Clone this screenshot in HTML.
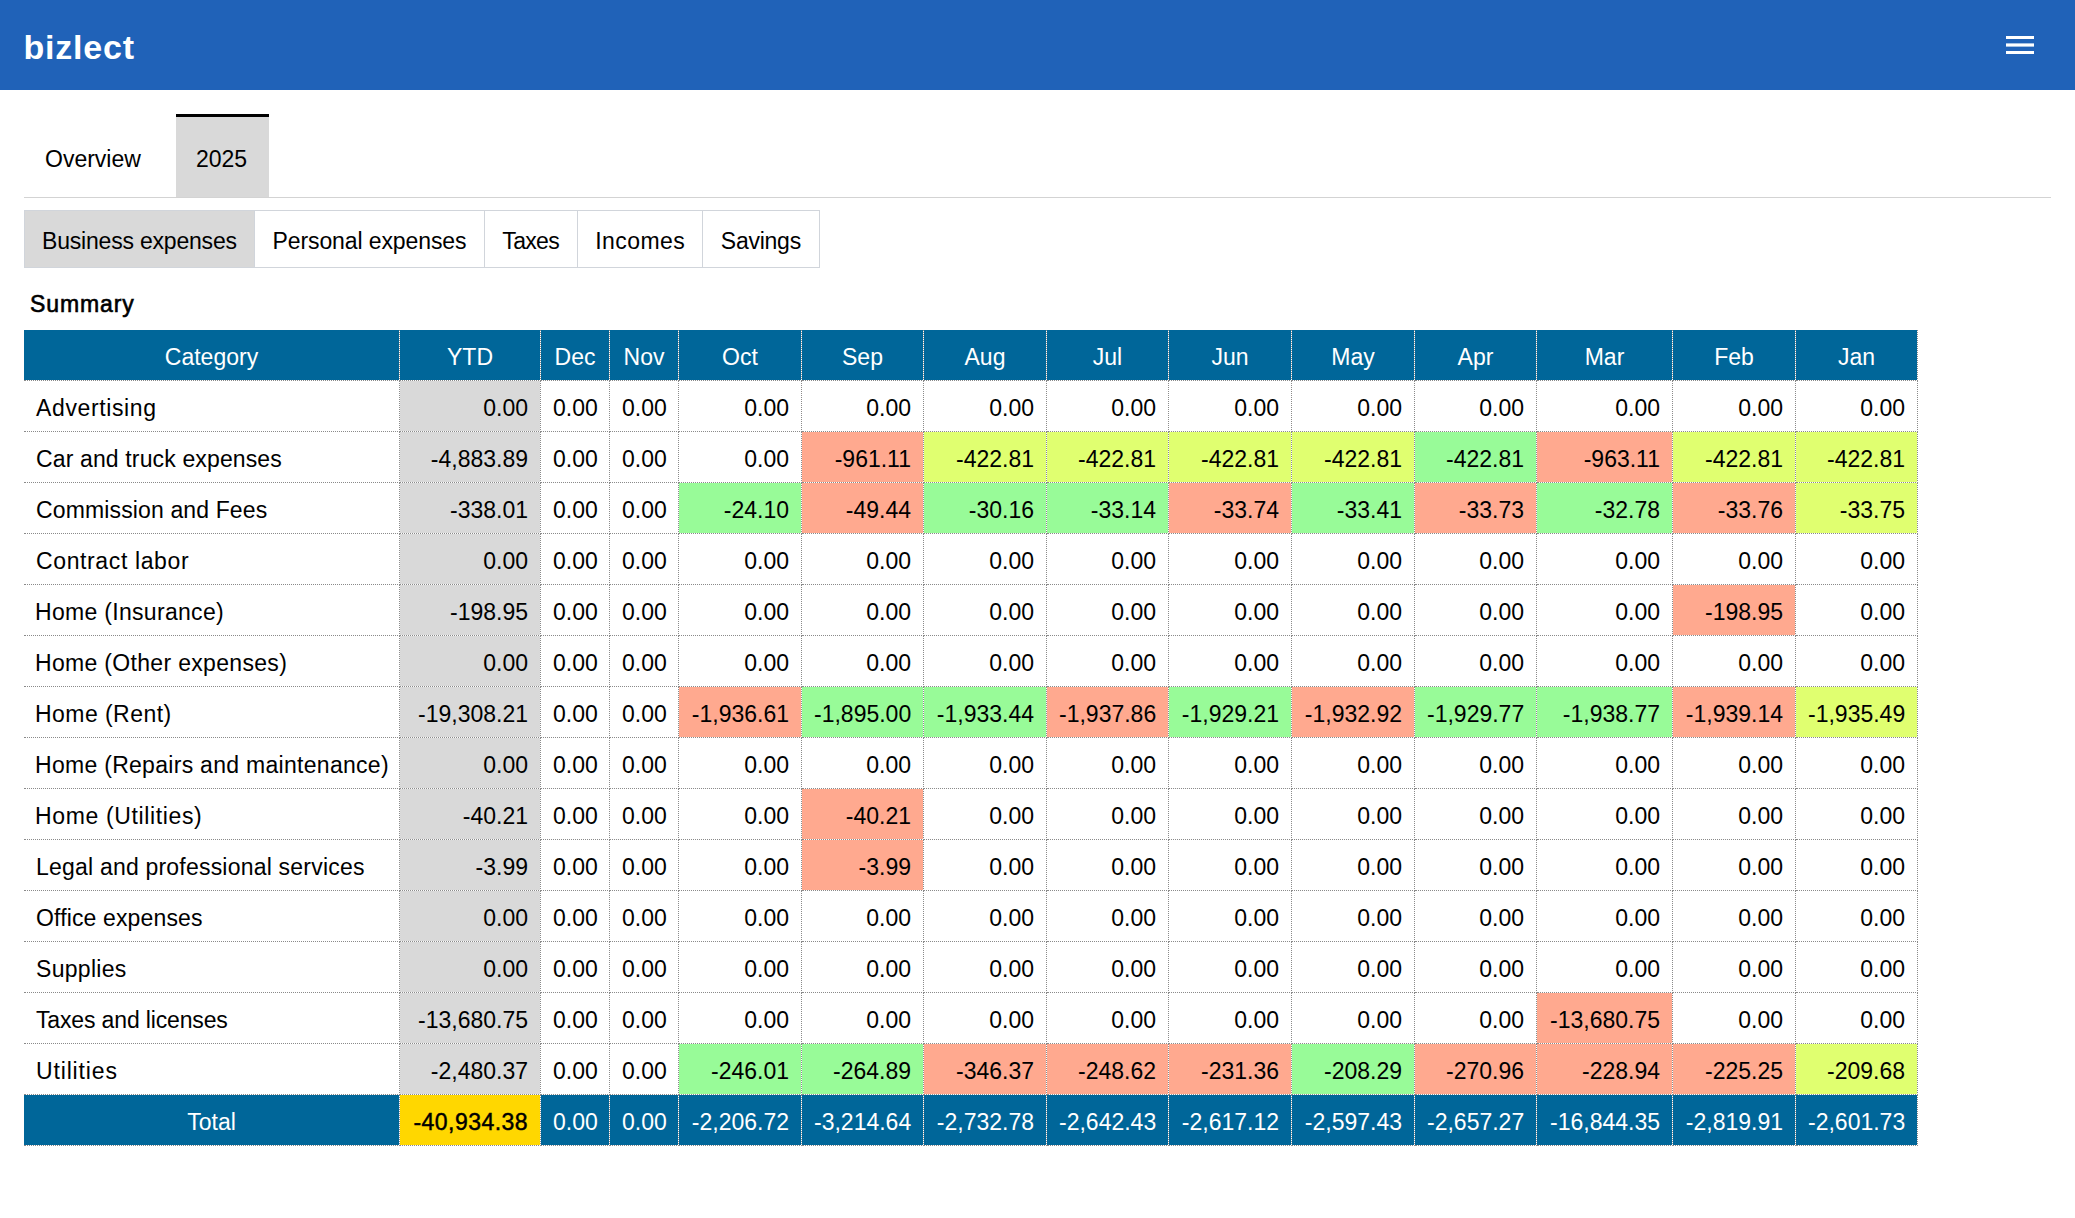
<!DOCTYPE html><html><head><meta charset="utf-8"><title>bizlect</title><style>
*{box-sizing:border-box;margin:0;padding:0}
html,body{width:2075px;height:1218px;overflow:hidden;background:#fff;font-family:"Liberation Sans",sans-serif;color:#000}
.top{position:absolute;left:0;top:0;width:2075px;height:90px;background:#2062b8}
.logo{position:absolute;left:23.5px;top:27px;font-size:34px;font-weight:bold;color:#fff;line-height:40px;letter-spacing:0.8px}
.bar{position:absolute;left:2006px;width:28px;height:3px;background:#fff}
.t{position:absolute;font-size:23px;line-height:30px;white-space:nowrap}
.tab2025{position:absolute;left:176px;top:114px;width:93px;height:83px;background:#d9d9d9;border-top:3px solid #000}
.tabline{position:absolute;left:24px;top:197px;width:2027px;height:1px;background:#d3d3d3}
.sub{position:absolute;top:210px;height:58px;border:1px solid #d1d5db;font-size:23px;text-align:center;line-height:60px;white-space:nowrap}
.summary{position:absolute;left:30px;top:289px;font-size:23px;font-weight:normal;-webkit-text-stroke:0.6px #000;letter-spacing:0.9px;line-height:30px}
.tbl{position:absolute;left:24px;top:330px;background:#fff}
.row{display:flex;height:51px}
.c{height:51px;border-right:1px dotted #8a8a8a;border-bottom:1px dotted #8a8a8a;font-size:23px;line-height:50px;padding:2px 12px 0;white-space:nowrap;overflow:hidden;text-align:right;background-clip:padding-box}
.c.cat{text-align:left}
.hd .c,.tot .c{background-color:#006699;color:#fff;text-align:center}
.tot .c{text-align:right}
.tot .c.cat{text-align:center}
.ytd{background-color:#d9d9d9}
.r{background-color:#ffa98f}
.g{background-color:#98fb98}
.y{background-color:#e0ff70}
.tot .gold{background-color:#ffd700;color:#000;-webkit-text-stroke:0.45px #000;letter-spacing:0.45px}
</style></head><body>
<div class="top"><div class="logo">bizlect</div><svg style="position:absolute;left:2006px;top:36px" width="28" height="18" viewBox="0 0 28 18"><rect x="0" y="0" width="28" height="3" fill="#fff"/><rect x="0" y="7.4" width="28" height="3.2" fill="#fff"/><rect x="0" y="15" width="28" height="3" fill="#fff"/></svg></div>
<div class="t" style="left:45px;top:144px">Overview</div>
<div class="tab2025"></div><div class="t" style="left:196px;top:144px">2025</div>
<div class="tabline"></div>
<div class="sub" style="left:24px;width:231px;background:#d9d9d9;letter-spacing:-0.2px;text-indent:-0.2px">Business expenses</div>
<div class="sub" style="left:254px;width:231px;background:#fff;letter-spacing:-0.1px;text-indent:-0.1px">Personal expenses</div>
<div class="sub" style="left:484px;width:94px;background:#fff;letter-spacing:-0.7px;text-indent:-0.7px">Taxes</div>
<div class="sub" style="left:577px;width:126px;background:#fff;letter-spacing:0.45px;text-indent:0.45px">Incomes</div>
<div class="sub" style="left:702px;width:118px;background:#fff;letter-spacing:-0.25px;text-indent:-0.25px">Savings</div>
<div class="summary">Summary</div>
<div class="tbl">
<div class="row hd"><div class="c" style="width:376px">Category</div><div class="c" style="width:141px">YTD</div><div class="c" style="width:69px">Dec</div><div class="c" style="width:69px">Nov</div><div class="c" style="width:123px">Oct</div><div class="c" style="width:122px">Sep</div><div class="c" style="width:123px">Aug</div><div class="c" style="width:122px">Jul</div><div class="c" style="width:123px">Jun</div><div class="c" style="width:123px">May</div><div class="c" style="width:122px">Apr</div><div class="c" style="width:136px">Mar</div><div class="c" style="width:123px">Feb</div><div class="c" style="width:122px">Jan</div></div>
<div class="row"><div class="c cat" style="width:376px;letter-spacing:0.63px;text-indent:0px">Advertising</div><div class="c ytd" style="width:141px">0.00</div><div class="c " style="width:69px">0.00</div><div class="c " style="width:69px">0.00</div><div class="c " style="width:123px">0.00</div><div class="c " style="width:122px">0.00</div><div class="c " style="width:123px">0.00</div><div class="c " style="width:122px">0.00</div><div class="c " style="width:123px">0.00</div><div class="c " style="width:123px">0.00</div><div class="c " style="width:122px">0.00</div><div class="c " style="width:136px">0.00</div><div class="c " style="width:123px">0.00</div><div class="c " style="width:122px">0.00</div></div>
<div class="row"><div class="c cat" style="width:376px;letter-spacing:0.138px;text-indent:0px">Car and truck expenses</div><div class="c ytd" style="width:141px">-4,883.89</div><div class="c " style="width:69px">0.00</div><div class="c " style="width:69px">0.00</div><div class="c " style="width:123px">0.00</div><div class="c r" style="width:122px">-961.11</div><div class="c y" style="width:123px">-422.81</div><div class="c y" style="width:122px">-422.81</div><div class="c y" style="width:123px">-422.81</div><div class="c y" style="width:123px">-422.81</div><div class="c g" style="width:122px">-422.81</div><div class="c r" style="width:136px">-963.11</div><div class="c y" style="width:123px">-422.81</div><div class="c y" style="width:122px">-422.81</div></div>
<div class="row"><div class="c cat" style="width:376px;letter-spacing:0.133px;text-indent:0px">Commission and Fees</div><div class="c ytd" style="width:141px">-338.01</div><div class="c " style="width:69px">0.00</div><div class="c " style="width:69px">0.00</div><div class="c g" style="width:123px">-24.10</div><div class="c r" style="width:122px">-49.44</div><div class="c g" style="width:123px">-30.16</div><div class="c g" style="width:122px">-33.14</div><div class="c r" style="width:123px">-33.74</div><div class="c g" style="width:123px">-33.41</div><div class="c r" style="width:122px">-33.73</div><div class="c g" style="width:136px">-32.78</div><div class="c r" style="width:123px">-33.76</div><div class="c y" style="width:122px">-33.75</div></div>
<div class="row"><div class="c cat" style="width:376px;letter-spacing:0.623px;text-indent:0px">Contract labor</div><div class="c ytd" style="width:141px">0.00</div><div class="c " style="width:69px">0.00</div><div class="c " style="width:69px">0.00</div><div class="c " style="width:123px">0.00</div><div class="c " style="width:122px">0.00</div><div class="c " style="width:123px">0.00</div><div class="c " style="width:122px">0.00</div><div class="c " style="width:123px">0.00</div><div class="c " style="width:123px">0.00</div><div class="c " style="width:122px">0.00</div><div class="c " style="width:136px">0.00</div><div class="c " style="width:123px">0.00</div><div class="c " style="width:122px">0.00</div></div>
<div class="row"><div class="c cat" style="width:376px;letter-spacing:0.307px;text-indent:-1px">Home (Insurance)</div><div class="c ytd" style="width:141px">-198.95</div><div class="c " style="width:69px">0.00</div><div class="c " style="width:69px">0.00</div><div class="c " style="width:123px">0.00</div><div class="c " style="width:122px">0.00</div><div class="c " style="width:123px">0.00</div><div class="c " style="width:122px">0.00</div><div class="c " style="width:123px">0.00</div><div class="c " style="width:123px">0.00</div><div class="c " style="width:122px">0.00</div><div class="c " style="width:136px">0.00</div><div class="c r" style="width:123px">-198.95</div><div class="c " style="width:122px">0.00</div></div>
<div class="row"><div class="c cat" style="width:376px;letter-spacing:0.32px;text-indent:-1px">Home (Other expenses)</div><div class="c ytd" style="width:141px">0.00</div><div class="c " style="width:69px">0.00</div><div class="c " style="width:69px">0.00</div><div class="c " style="width:123px">0.00</div><div class="c " style="width:122px">0.00</div><div class="c " style="width:123px">0.00</div><div class="c " style="width:122px">0.00</div><div class="c " style="width:123px">0.00</div><div class="c " style="width:123px">0.00</div><div class="c " style="width:122px">0.00</div><div class="c " style="width:136px">0.00</div><div class="c " style="width:123px">0.00</div><div class="c " style="width:122px">0.00</div></div>
<div class="row"><div class="c cat" style="width:376px;letter-spacing:0.45px;text-indent:-1px">Home (Rent)</div><div class="c ytd" style="width:141px">-19,308.21</div><div class="c " style="width:69px">0.00</div><div class="c " style="width:69px">0.00</div><div class="c r" style="width:123px">-1,936.61</div><div class="c g" style="width:122px">-1,895.00</div><div class="c g" style="width:123px">-1,933.44</div><div class="c r" style="width:122px">-1,937.86</div><div class="c g" style="width:123px">-1,929.21</div><div class="c r" style="width:123px">-1,932.92</div><div class="c g" style="width:122px">-1,929.77</div><div class="c g" style="width:136px">-1,938.77</div><div class="c r" style="width:123px">-1,939.14</div><div class="c y" style="width:122px">-1,935.49</div></div>
<div class="row"><div class="c cat" style="width:376px;letter-spacing:0.29px;text-indent:-1px">Home (Repairs and maintenance)</div><div class="c ytd" style="width:141px">0.00</div><div class="c " style="width:69px">0.00</div><div class="c " style="width:69px">0.00</div><div class="c " style="width:123px">0.00</div><div class="c " style="width:122px">0.00</div><div class="c " style="width:123px">0.00</div><div class="c " style="width:122px">0.00</div><div class="c " style="width:123px">0.00</div><div class="c " style="width:123px">0.00</div><div class="c " style="width:122px">0.00</div><div class="c " style="width:136px">0.00</div><div class="c " style="width:123px">0.00</div><div class="c " style="width:122px">0.00</div></div>
<div class="row"><div class="c cat" style="width:376px;letter-spacing:0.633px;text-indent:-1px">Home (Utilities)</div><div class="c ytd" style="width:141px">-40.21</div><div class="c " style="width:69px">0.00</div><div class="c " style="width:69px">0.00</div><div class="c " style="width:123px">0.00</div><div class="c r" style="width:122px">-40.21</div><div class="c " style="width:123px">0.00</div><div class="c " style="width:122px">0.00</div><div class="c " style="width:123px">0.00</div><div class="c " style="width:123px">0.00</div><div class="c " style="width:122px">0.00</div><div class="c " style="width:136px">0.00</div><div class="c " style="width:123px">0.00</div><div class="c " style="width:122px">0.00</div></div>
<div class="row"><div class="c cat" style="width:376px;letter-spacing:0.207px;text-indent:0px">Legal and professional services</div><div class="c ytd" style="width:141px">-3.99</div><div class="c " style="width:69px">0.00</div><div class="c " style="width:69px">0.00</div><div class="c " style="width:123px">0.00</div><div class="c r" style="width:122px">-3.99</div><div class="c " style="width:123px">0.00</div><div class="c " style="width:122px">0.00</div><div class="c " style="width:123px">0.00</div><div class="c " style="width:123px">0.00</div><div class="c " style="width:122px">0.00</div><div class="c " style="width:136px">0.00</div><div class="c " style="width:123px">0.00</div><div class="c " style="width:122px">0.00</div></div>
<div class="row"><div class="c cat" style="width:376px;letter-spacing:0.143px;text-indent:0px">Office expenses</div><div class="c ytd" style="width:141px">0.00</div><div class="c " style="width:69px">0.00</div><div class="c " style="width:69px">0.00</div><div class="c " style="width:123px">0.00</div><div class="c " style="width:122px">0.00</div><div class="c " style="width:123px">0.00</div><div class="c " style="width:122px">0.00</div><div class="c " style="width:123px">0.00</div><div class="c " style="width:123px">0.00</div><div class="c " style="width:122px">0.00</div><div class="c " style="width:136px">0.00</div><div class="c " style="width:123px">0.00</div><div class="c " style="width:122px">0.00</div></div>
<div class="row"><div class="c cat" style="width:376px;letter-spacing:0.3px;text-indent:0px">Supplies</div><div class="c ytd" style="width:141px">0.00</div><div class="c " style="width:69px">0.00</div><div class="c " style="width:69px">0.00</div><div class="c " style="width:123px">0.00</div><div class="c " style="width:122px">0.00</div><div class="c " style="width:123px">0.00</div><div class="c " style="width:122px">0.00</div><div class="c " style="width:123px">0.00</div><div class="c " style="width:123px">0.00</div><div class="c " style="width:122px">0.00</div><div class="c " style="width:136px">0.00</div><div class="c " style="width:123px">0.00</div><div class="c " style="width:122px">0.00</div></div>
<div class="row"><div class="c cat" style="width:376px;letter-spacing:-0.147px;text-indent:0px">Taxes and licenses</div><div class="c ytd" style="width:141px">-13,680.75</div><div class="c " style="width:69px">0.00</div><div class="c " style="width:69px">0.00</div><div class="c " style="width:123px">0.00</div><div class="c " style="width:122px">0.00</div><div class="c " style="width:123px">0.00</div><div class="c " style="width:122px">0.00</div><div class="c " style="width:123px">0.00</div><div class="c " style="width:123px">0.00</div><div class="c " style="width:122px">0.00</div><div class="c r" style="width:136px">-13,680.75</div><div class="c " style="width:123px">0.00</div><div class="c " style="width:122px">0.00</div></div>
<div class="row"><div class="c cat" style="width:376px;letter-spacing:0.85px;text-indent:0px">Utilities</div><div class="c ytd" style="width:141px">-2,480.37</div><div class="c " style="width:69px">0.00</div><div class="c " style="width:69px">0.00</div><div class="c g" style="width:123px">-246.01</div><div class="c g" style="width:122px">-264.89</div><div class="c r" style="width:123px">-346.37</div><div class="c r" style="width:122px">-248.62</div><div class="c r" style="width:123px">-231.36</div><div class="c g" style="width:123px">-208.29</div><div class="c r" style="width:122px">-270.96</div><div class="c r" style="width:136px">-228.94</div><div class="c r" style="width:123px">-225.25</div><div class="c y" style="width:122px">-209.68</div></div>
<div class="row tot"><div class="c cat" style="width:376px">Total</div><div class="c gold" style="width:141px">-40,934.38</div><div class="c" style="width:69px">0.00</div><div class="c" style="width:69px">0.00</div><div class="c" style="width:123px">-2,206.72</div><div class="c" style="width:122px">-3,214.64</div><div class="c" style="width:123px">-2,732.78</div><div class="c" style="width:122px">-2,642.43</div><div class="c" style="width:123px">-2,617.12</div><div class="c" style="width:123px">-2,597.43</div><div class="c" style="width:122px">-2,657.27</div><div class="c" style="width:136px">-16,844.35</div><div class="c" style="width:123px">-2,819.91</div><div class="c" style="width:122px">-2,601.73</div></div>
</div></body></html>
